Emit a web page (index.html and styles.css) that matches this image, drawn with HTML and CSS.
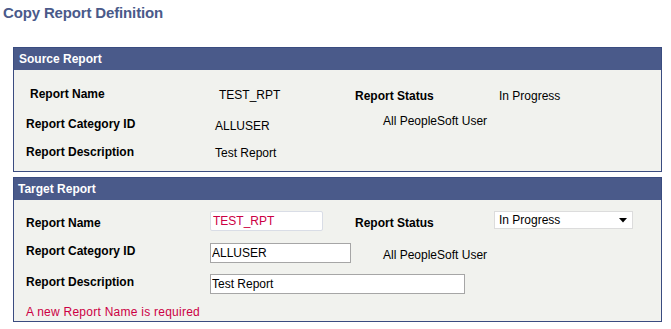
FILE: index.html
```html
<!DOCTYPE html>
<html>
<head>
<meta charset="utf-8">
<title>Copy Report Definition</title>
<link rel="stylesheet" href="styles.css">
</head>
<body>
<div class="page">
  <h1 class="title">Copy Report Definition</h1>

  <section class="group">
    <div class="group-head">Source Report</div>
    <div class="group-body src">
      <div class="row r1">
        <span class="lbl w-src-lbl1">Report Name</span>
        <span class="val w-src-val1 dn1">TEST_RPT</span>
        <span class="lbl w-src-st dn2">Report Status</span>
        <span class="val dn2">In Progress</span>
      </div>
      <div class="row r2">
        <span class="lbl w-src-lbl dn3">Report Category ID</span>
        <span class="val w-src-val2 dn5">ALLUSER</span>
        <span class="val">All PeopleSoft User</span>
      </div>
      <div class="row r3">
        <span class="lbl w-src-lbl">Report Description</span>
        <span class="val dn1">Test Report</span>
      </div>
    </div>
  </section>

  <section class="group second">
    <div class="group-head">Target Report</div>
    <div class="group-body tgt">
      <div class="row t1">
        <span class="lbl w-tgt-lbl dn5">Report Name</span>
        <input class="field f-name" type="text" value="TEST_RPT">
        <span class="lbl w-tgt-st dn5">Report Status</span>
        <div class="select">
          <span>In Progress</span>
          <svg class="arrow" width="8" height="5" viewBox="0 0 8 5"><path d="M0 0H8L4 4.5Z" fill="#000"/></svg>
        </div>
      </div>
      <div class="row t2">
        <span class="lbl w-tgt-lbl dn1">Report Category ID</span>
        <input class="field f-cat" type="text" value="ALLUSER">
        <span class="val desc-gap dn5">All PeopleSoft User</span>
      </div>
      <div class="row t3">
        <span class="lbl w-tgt-lbl dn1">Report Description</span>
        <input class="field f-desc" type="text" value="Test Report">
      </div>
      <div class="row t4">
        <span class="msg">A new Report Name is required</span>
      </div>
    </div>
  </section>
</div>
</body>
</html>
```

FILE: styles.css
```css
* { box-sizing: border-box; }
html, body { margin: 0; padding: 0; background: #fff; }
body {
  font-family: "Liberation Sans", Arial, sans-serif;
  font-size: 12px;
  color: #000;
}
.page { width: 671px; padding: 0 9px 0 13px; }
.title {
  margin: 0 0 0 -10px;
  padding-top: 4px;
  font-size: 15px;
  line-height: 17px;
  font-weight: bold;
  letter-spacing: -0.15px;
  color: #4a5a8a;
}
.group {
  margin-top: 26px;
  border: 1px solid #3a4c80;
  width: 649px;
}
.group.second { margin-top: 5px; }
.group-head {
  height: 22px;
  line-height: 22px;
  background: #4a5a8a;
  color: #fff;
  font-weight: bold;
  padding-left: 5px;
}
.group.second .group-head { padding-left: 4px; }
.group-body { background: #f1f2ee; }
.src { padding: 17px 0 12px 0; height: 101px; }
.tgt { padding: 11px 0 2px 0; height: 121px; }

.row { display: flex; align-items: flex-start; padding-left: 12px; }
.r1 { height: 27px; padding-left: 16px; }
.r2 { height: 31px; }
.r3 { height: 14px; }
.t1 { height: 32px; }
.t2 { height: 31px; }
.t3 { height: 31px; }
.t4 { height: 14px; }

.lbl { font-weight: bold; line-height: 14px; white-space: nowrap; }
.val { line-height: 14px; white-space: nowrap; }
.msg { line-height: 14px; color: #cc0044; letter-spacing: 0.25px; }

.dn1 { margin-top: 1px; }
.dn2 { margin-top: 2px; }
.dn3 { margin-top: 3px; }
.dn5 { margin-top: 5px; }

.w-src-lbl1 { width: 189px; }
.w-src-val1 { width: 136px; }
.w-src-st { width: 144px; }
.w-src-lbl { width: 189px; }
.w-src-val2 { width: 168px; }

.w-tgt-lbl { width: 184px; }
.w-tgt-st { width: 139px; margin-left: 32px; }
.desc-gap { margin-left: 32px; }

.field {
  font-family: "Liberation Sans", Arial, sans-serif;
  font-size: 12px;
  color: #000;
  height: 20px;
  margin: 0;
  padding: 0 1px;
  background: #fff;
  border: 1px solid #a6a6a6;
  border-radius: 0;
  outline: none;
}
.f-name {
  width: 113px;
  color: #cc0044;
  padding-left: 2px;
  border: 1px solid #d9dde6;
  border-radius: 2px;
}
.f-cat { width: 141px; }
.f-desc { width: 255px; }

.select {
  width: 139px;
  height: 18px;
  background: #fff;
  border: 1px solid #dcdcdc;
  display: flex;
  align-items: center;
  justify-content: space-between;
  padding: 0 5px 0 4px;
  line-height: 14px;
}
.arrow { display: block; margin-top: 1px; }
```
